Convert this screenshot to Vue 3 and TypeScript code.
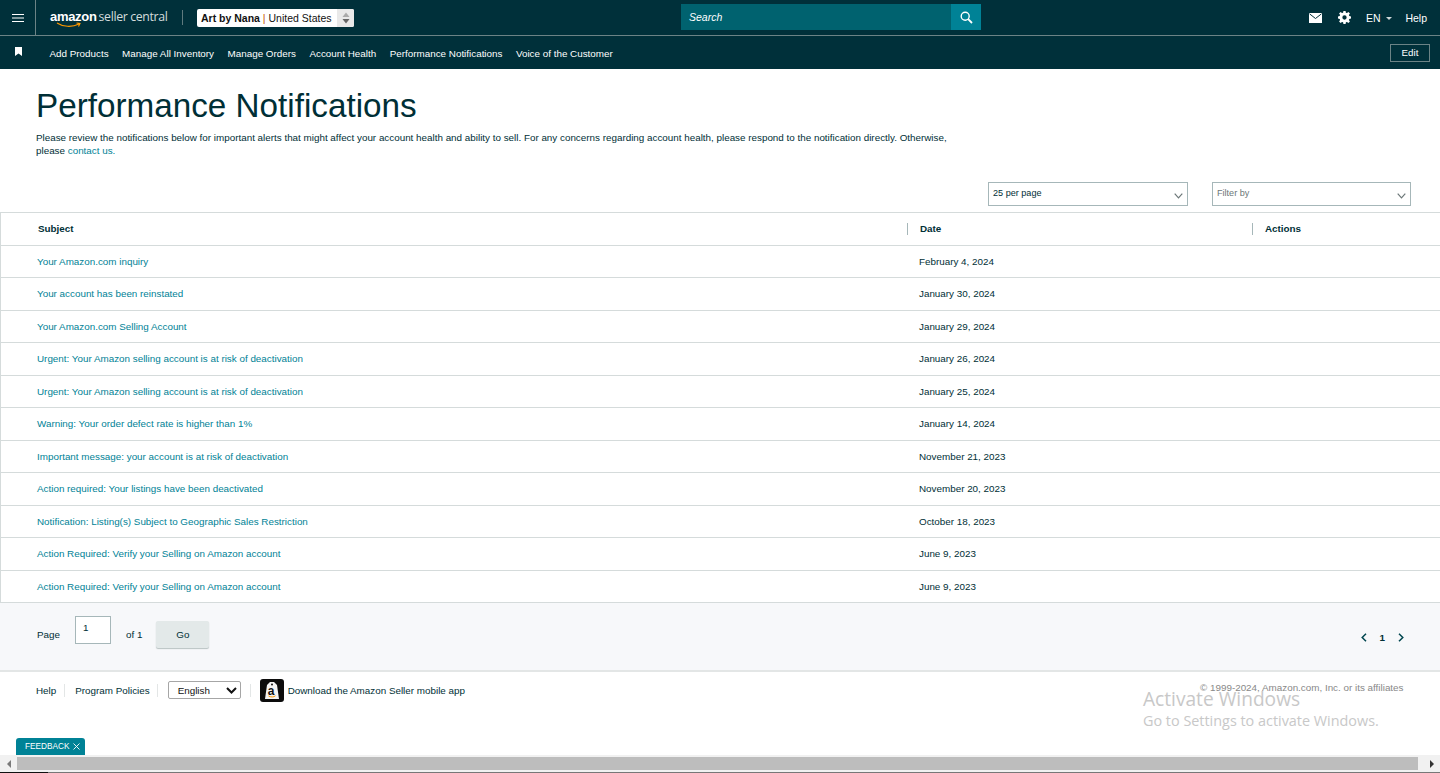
<script setup lang="ts">
const navLinks = ['Add Products', 'Manage All Inventory', 'Manage Orders', 'Account Health', 'Performance Notifications', 'Voice of the Customer']

const rows = [
  { subject: 'Your Amazon.com inquiry', date: 'February 4, 2024' },
  { subject: 'Your account has been reinstated', date: 'January 30, 2024' },
  { subject: 'Your Amazon.com Selling Account', date: 'January 29, 2024' },
  { subject: 'Urgent: Your Amazon selling account is at risk of deactivation', date: 'January 26, 2024' },
  { subject: 'Urgent: Your Amazon selling account is at risk of deactivation', date: 'January 25, 2024' },
  { subject: 'Warning: Your order defect rate is higher than 1%', date: 'January 14, 2024' },
  { subject: 'Important message: your account is at risk of deactivation', date: 'November 21, 2023' },
  { subject: 'Action required: Your listings have been deactivated', date: 'November 20, 2023' },
  { subject: 'Notification: Listing(s) Subject to Geographic Sales Restriction', date: 'October 18, 2023' },
  { subject: 'Action Required: Verify your Selling on Amazon account', date: 'June 9, 2023' },
  { subject: 'Action Required: Verify your Selling on Amazon account', date: 'June 9, 2023' },
]
</script>

<template>
  <div class="screen">
    <div class="page">
      <header class="topbar">
        <div class="burger">
          <svg width="12" height="8" viewBox="0 0 12 8"><path d="M0 .5h12M0 4h12M0 7.500h12" stroke="#fff" stroke-width="1" /></svg>
        </div>
        <div class="logo">
          <span class="logo-amazon">amazon</span>
          <span class="logo-sc">seller central</span>
          <svg class="smile" width="26" height="6" viewBox="0 0 26 6"><path d="M1 1c6 4 15 4.500 22 1M20.500 1l3.500.5-1.500 3" fill="none" stroke="#f90" stroke-width="1.100" /></svg>
        </div>
        <span class="logo-sep"></span>
        <div class="account">
          <span class="acct-text"><b>Art by Nana</b> <i>|</i> United States</span>
          <span class="acct-arrows">
            <svg width="8" height="12" viewBox="0 0 8 12"><path d="M4 .500 7.500 5H.5z" fill="#aaa" /><path d="M.5 7h7L4 11.500z" fill="#666" /></svg>
          </span>
        </div>
        <div class="search">
          <span class="search-input">Search</span>
          <span class="search-btn">
            <svg width="13" height="13" viewBox="0 0 13 13"><circle cx="5.200" cy="5.200" r="4" fill="none" stroke="#fff" stroke-width="1.400" /><path d="M8.200 8.200 12 12" stroke="#fff" stroke-width="1.800" /></svg>
          </span>
        </div>
        <div class="top-right">
          <svg class="mail" width="13" height="10" viewBox="0 0 13 10"><path d="M0 0h13v10H0z" fill="#fff" /><path d="M.5.800 6.500 5.500 12.500.800" fill="none" stroke="#00303a" stroke-width="1" /></svg>
          <svg class="gear" width="13" height="13" viewBox="0 0 24 24"><path fill="#fff" fill-rule="evenodd" d="M10 0h4l.6 3.100 2 .8L19.200 2 22 4.800l-1.900 2.600.8 2 3.100.6v4l-3.100.6-.8 2 1.900 2.600-2.800 2.800-2.600-1.900-2 .8L14 24h-4l-.6-3.100-2-.8L4.800 22 2 19.200l1.900-2.600-.8-2L0 14v-4l3.100-.6.8-2L2 4.800 4.800 2l2.600 1.900 2-.8zM12 8a4 4 0 1 0 0 8 4 4 0 0 0 0-8z" /></svg>
          <span class="lang">EN <em></em></span>
          <span class="help">Help</span>
        </div>
      </header>

      <nav class="navbar">
        <svg class="bookmark" width="7" height="9" viewBox="0 0 7 9"><path d="M0 0h7v9L3.500 6.500 0 9z" fill="#fff" /></svg>
        <a v-for="link in navLinks" :key="link" class="nav-link">{{ link }}</a>
        <button class="edit">Edit</button>
      </nav>

      <main>
        <section class="intro">
          <h1>Performance Notifications</h1>
          <p>Please review the notifications below for important alerts that might affect your account health and ability to sell. For any concerns regarding account health, please respond to the notification directly. Otherwise, please <a>contact us.</a></p>
        </section>

        <div class="filters">
          <div class="select">
            <span>25 per page</span>
            <svg width="9" height="6" viewBox="0 0 9 6"><path d="M.7.700 4.500 4.800 8.300.700" fill="none" stroke="#6c7778" stroke-width="1.200" /></svg>
          </div>
          <div class="select filter">
            <span>Filter by</span>
            <svg width="9" height="6" viewBox="0 0 9 6"><path d="M.7.700 4.500 4.800 8.300.700" fill="none" stroke="#6c7778" stroke-width="1.200" /></svg>
          </div>
        </div>

        <div class="table">
          <div class="row head">
            <div class="col-subject">Subject</div>
            <div class="col-date"><span>Date</span></div>
            <div class="col-actions"><span>Actions</span></div>
          </div>
          <div v-for="(row, i) in rows" :key="i" class="row">
            <a class="col-subject">{{ row.subject }}</a>
            <div class="col-date">{{ row.date }}</div>
            <div class="col-actions"></div>
          </div>
        </div>

        <div class="pager">
          <span class="pg-label">Page</span>
          <span class="pg-input">1</span>
          <span class="pg-of">of 1</span>
          <button class="pg-go">Go</button>
          <div class="pg-nav">
            <svg width="6" height="9" viewBox="0 0 6 9"><path d="M5 .7 1.200 4.500 5 8.300" fill="none" stroke="#00464f" stroke-width="1.500" /></svg>
            <b>1</b>
            <svg width="6" height="9" viewBox="0 0 6 9"><path d="M1 .7 4.800 4.500 1 8.300" fill="none" stroke="#00464f" stroke-width="1.500" /></svg>
          </div>
        </div>

        <footer class="footer">
          <a class="f-link first">Help</a>
          <a class="f-link second">Program Policies</a>
          <div class="lang-select">
            <span>English</span>
            <svg width="11" height="7" viewBox="0 0 11 7"><path d="M1 1l4.500 4.500L10 1" fill="none" stroke="#111" stroke-width="2" /></svg>
          </div>
          <div class="app-block">
            <span class="app-icon">
              <svg width="16" height="19" viewBox="0 0 16 19">
                <path d="M3 4 6 1h4l3 3 2 14H1z" fill="#f4f4f4" />
                <circle cx="8" cy="3.500" r="1" fill="#111" />
                <path d="M4.500 15c2.500 1.300 5 1.300 7-.2" fill="none" stroke="#f90" stroke-width="1" />
              </svg>
              <span class="app-a">a</span>
            </span>
            <a class="f-link">Download the Amazon Seller mobile app</a>
          </div>
          <span class="copyright">© 1999-2024, Amazon.com, Inc. or its affiliates</span>
        </footer>
      </main>
    </div>

    <div class="feedback">FEEDBACK <span class="fb-x">
      <svg width="7" height="7" viewBox="0 0 7 7"><path d="M.5.500l6 6M6.500.500l-6 6" stroke="#fff" stroke-width=".9" /></svg>
    </span></div>

    <div class="watermark">
      <div class="wm-title">Activate Windows</div>
      <div class="wm-sub">Go to Settings to activate Windows.</div>
    </div>

    <div class="hscroll">
      <span class="sb-btn"><em class="left"></em></span>
      <span class="sb-thumb"></span>
      <span class="sb-btn end"><em class="right"></em></span>
    </div>
    <div class="taskbar-edge"><span></span></div>
  </div>
</template>

<style>
html, body {
  margin: 0;
  overflow: hidden;
}
</style>

<style scoped>
.screen {
  position: relative;
  width: 1440px;
  height: 773px;
  display: flex;
  flex-direction: column;
  overflow: hidden;
  background: #fff;
  font-family: "Liberation Sans", Arial, sans-serif;
  font-size: 9.860px;
  color: #002f36;
}
.page {
  flex: 1;
  min-height: 0;
  overflow: hidden;
}

.topbar {
  height: 35px;
  display: flex;
  align-items: center;
  position: relative;
  background: #00303a;
  border-bottom: 1px solid #6c8386;
}
.burger {
  width: 36px;
  height: 35px;
  display: flex;
  align-items: center;
  justify-content: center;
  border-right: 1px solid #6c8386;
  box-sizing: border-box;
}
.logo {
  position: relative;
  margin-left: 14px;
  width: 120px;
  height: 22px;
  color: #fff;
  white-space: nowrap;
  line-height: 20px;
}
.logo-amazon {
  font-size: 13px;
  font-weight: 700;
  letter-spacing: -.3px;
}
.logo-sc {
  font-family: "Open Sans", sans-serif;
  font-size: 12.300px;
  margin-left: 2px;
  letter-spacing: -.35px;
  color: #d4dcdd;
}
.smile {
  position: absolute;
  left: 6px;
  top: 15px;
}
.logo-sep {
  width: 1px;
  height: 15px;
  background: #5f7a7e;
  margin-left: 12px;
}
.account {
  margin-left: 14px;
  width: 157px;
  height: 18px;
  box-sizing: border-box;
  background: #fff;
  border-radius: 2px;
  display: flex;
  align-items: center;
  justify-content: space-between;
  padding-left: 4px;
  color: #111;
  font-size: 10.500px;
}
.acct-text i {
  font-style: normal;
  color: #c45500;
}
.acct-arrows {
  width: 17px;
  height: 18px;
  background: #e9e9e9;
  display: flex;
  align-items: center;
  justify-content: center;
  border-radius: 0 2px 2px 0;
}
.search {
  position: absolute;
  left: 681px;
  top: 4px;
  width: 300px;
  height: 26px;
  display: flex;
}
.search-input {
  flex: 1;
  background: #00626f;
  color: #fff;
  font-style: italic;
  font-size: 10.500px;
  line-height: 26px;
  padding-left: 8px;
}
.search-btn {
  width: 30px;
  background: #008296;
  display: flex;
  align-items: center;
  justify-content: center;
}
.top-right {
  margin-left: auto;
  display: flex;
  align-items: center;
  color: #fff;
  font-size: 10.500px;
  padding-right: 13px;
}
.mail {
  margin-right: 16px;
}
.gear {
  margin-right: 15px;
}
.lang em {
  display: inline-block;
  margin-left: 3px;
  vertical-align: 2px;
  border: 3.500px solid transparent;
  border-top: 3px solid #d0d8d9;
  border-bottom: 0;
}
.help {
  margin-left: 13px;
}

.navbar {
  height: 33px;
  display: flex;
  align-items: center;
  background: #00303a;
  position: relative;
  color: #fff;
}
.bookmark {
  margin-left: 15px;
  margin-right: 27.500px;
  margin-top: -3px;
}
.nav-link {
  margin-right: 13.500px;
  margin-top: 2px;
  white-space: nowrap;
}
.edit {
  position: absolute;
  right: 10px;
  top: 8px;
  width: 40px;
  height: 18px;
  background: transparent;
  border: 1px solid #6c8386;
  color: #fff;
  font: 9.750px "Liberation Sans", Arial, sans-serif;
  padding: 0 0 1px;
}

.intro {
  padding: 18px 0 0 36px;
  height: 95px;
  box-sizing: border-box;
}
h1 {
  margin: 0 0 6px;
  font-size: 33.250px;
  font-weight: 400;
  line-height: 38px;
  color: #002f36;
}
.intro p {
  margin: 0;
  width: 920px;
  line-height: 13px;
}
.intro a,
a.col-subject {
  color: #008296;
}
.filters {
  height: 48px;
  display: flex;
  justify-content: flex-end;
  gap: 24px;
  padding: 18px 29px 0 0;
  box-sizing: border-box;
}
.select {
  width: 200px;
  height: 24px;
  box-sizing: border-box;
  border: 1px solid #a6b7b9;
  display: flex;
  align-items: center;
  justify-content: space-between;
  padding: 0 4px;
  font-size: 9.100px;
}
.select span {
  margin-top: -3px;
}
.select svg {
  margin-top: 3px;
}
.select.filter {
  width: 199px;
  color: #6c7778;
}

.table {
  border-top: 1px solid #d5dbdb;
  border-left: 1px solid #d5dbdb;
}
.row {
  height: 32.500px;
  display: flex;
  align-items: center;
  box-sizing: border-box;
  border-bottom: 1px solid #d5dbdb;
}
.row.head {
  font-weight: 700;
}
.col-subject {
  width: 906px;
  padding-left: 36px;
  box-sizing: border-box;
}
.head .col-subject {
  padding-left: 37px;
}
.col-date {
  width: 345px;
  padding-left: 12px;
  box-sizing: border-box;
}
.col-actions {
  flex: 1;
  padding-left: 12px;
}
.head .col-date,
.head .col-actions {
  border-left: 1px solid #a6b7b9;
  height: 12px;
  line-height: 12px;
}

.pager {
  height: 69px;
  background: #f7f8fa;
  border-bottom: 2px solid #e3e6e6;
  display: flex;
  align-items: flex-start;
  box-sizing: border-box;
  padding-left: 37px;
}
.pg-label {
  margin-top: 26px;
}
.pg-input {
  margin-left: 15px;
  margin-top: 13px;
  width: 36px;
  height: 28px;
  box-sizing: border-box;
  border: 1px solid #a6b7b9;
  background: #fff;
  padding: 5px 0 0 7px;
}
.pg-of {
  margin-left: 15px;
  margin-top: 26px;
}
.pg-go {
  margin-left: 14px;
  margin-top: 18px;
  width: 53px;
  height: 27px;
  border: 0;
  border-radius: 2px;
  background: #e3e9e9;
  box-shadow: 0 1px 1px #b8c2c2;
  color: #002f36;
  font: 9.860px "Liberation Sans", Arial, sans-serif;
}
.pg-nav {
  margin-left: auto;
  margin-right: 36px;
  margin-top: 29px;
  display: flex;
  align-items: center;
  gap: 13px;
}

.footer {
  position: relative;
  height: 36px;
  display: flex;
  align-items: center;
  padding-left: 36px;
  color: #002f36;
}
.f-link {
  white-space: nowrap;
}
.first {
  padding-right: 8px;
  border-right: 1px solid #e3e6e6;
  line-height: 13px;
}
.second {
  margin-left: 10px;
  padding-right: 7px;
  border-right: 1px solid #e3e6e6;
  line-height: 13px;
}
.lang-select {
  margin-left: 10px;
  width: 73px;
  height: 18px;
  box-sizing: border-box;
  border: 1px solid #a6a6a6;
  border-radius: 2px;
  display: flex;
  align-items: center;
  justify-content: space-between;
  padding: 0 3px 0 9px;
  color: #111;
}
.app-block {
  margin-left: 9px;
  padding-left: 9px;
  border-left: 1px solid #e3e6e6;
  display: flex;
  align-items: center;
  gap: 4px;
  height: 13px;
}
.app-icon {
  position: relative;
  width: 24px;
  height: 23px;
  border-radius: 3px;
  background: #0c0c0c;
  display: flex;
  align-items: center;
  justify-content: center;
}
.app-a {
  position: absolute;
  left: 8px;
  top: 5px;
  font-weight: 700;
  font-size: 12px;
  color: #111;
}
.copyright {
  position: absolute;
  left: 1200px;
  top: 10px;
  color: #888;
  font-size: 9.860px;
  white-space: nowrap;
}

.feedback {
  position: absolute;
  left: 16px;
  top: 738px;
  width: 69px;
  height: 17px;
  box-sizing: border-box;
  padding-left: 9px;
  background: #008296;
  border-radius: 3px 3px 0 0;
  color: #fff;
  font-size: 8.250px;
  line-height: 17px;
  white-space: nowrap;
}
.fb-x svg {
  vertical-align: -1px;
  margin-left: 1px;
}

.watermark {
  position: absolute;
  left: 1143px;
  top: 685px;
  color: #c8c8c8;
  font-family: "Open Sans", sans-serif;
  pointer-events: none;
}
.wm-title {
  font-size: 19.150px;
  line-height: 28px;
}
.wm-sub {
  font-size: 14.400px;
  line-height: 20px;
  margin-top: -2px;
}

.hscroll {
  height: 17px;
  flex: none;
  display: flex;
  background: #f1f1f1;
}
.sb-btn {
  width: 17px;
  display: flex;
  align-items: center;
  justify-content: center;
}
.sb-btn.end {
  width: 22px;
  padding-left: 5px;
  box-sizing: border-box;
}
.sb-btn em {
  border: 4px solid transparent;
}
.sb-btn .left {
  border-right-color: #7a7a7a;
  border-left: 0;
}
.sb-btn .right {
  border-left-color: #333;
  border-right: 0;
}
.sb-thumb {
  flex: 1;
  margin: 2px 0;
  background: #bdbdbd;
}
.taskbar-edge {
  height: 1px;
  flex: none;
  background: #777;
}
.taskbar-edge span {
  display: block;
  width: 48px;
  height: 1px;
  background: #111;
}
</style>
